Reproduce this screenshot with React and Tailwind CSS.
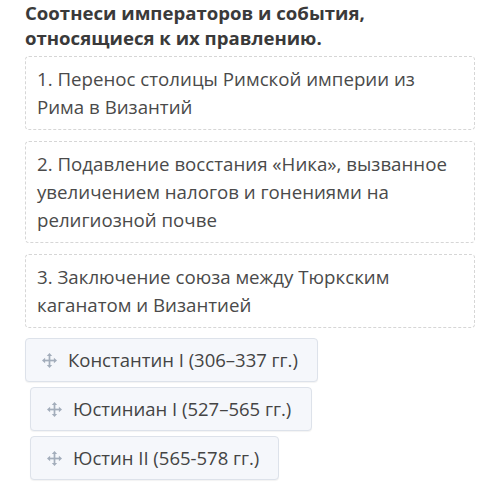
function MoveIcon() {
  return (
    <svg width="15" height="15" viewBox="0 0 14 14" className="shrink-0" fill="#a3adbb">
      <rect x="6.2" y="2" width="1.6" height="10" />
      <rect x="2" y="6.2" width="10" height="1.6" />
      <polygon points="7,0 4.5,2.9 9.5,2.9" />
      <polygon points="7,14 4.5,11.1 9.5,11.1" />
      <polygon points="0,7 2.9,4.5 2.9,9.5" />
      <polygon points="14,7 11.1,4.5 11.1,9.5" />
    </svg>
  );
}

export default function App() {
  const events = [
    '1. Перенос столицы Римской империи из Рима в Византий',
    '2. Подавление восстания «Ника», вызванное увеличением налогов и гонениями на религиозной почве',
    '3. Заключение союза между Тюркским каганатом и Византией',
  ];

  const rulers = [
    { name: 'Константин I (306–337 гг.)', cls: 'ml-0 w-[293px]' },
    { name: 'Юстиниан I (527–565 гг.)', cls: 'ml-[5px] w-[282px]' },
    { name: 'Юстин II (565-578 гг.)', cls: 'ml-[5px] w-[249px]' },
  ];

  return (
    <div className="w-[500px] h-[482px] bg-white overflow-hidden px-[25px] font-['Open_Sans',sans-serif]">
      <h1 className="text-[18.6px] leading-[25px] font-bold text-[#3a3a3a]">
        Соотнеси императоров и события,
        <br />
        относящиеся к их правлению.
      </h1>

      <div className="mt-[6px] flex flex-col gap-[11px] w-[450px]">
        {events.map((e) => (
          <div
            key={e}
            className="border border-dashed border-[#d6d6d6] rounded-[4px] pl-[11px] pr-[19px] py-[8px] text-[18.7px] leading-[28px] text-[#4a4a4a]"
          >
            {e}
          </div>
        ))}
      </div>

      <div className="mt-[10px] flex flex-col gap-[5px]">
        {rulers.map((r) => (
          <div
            key={r.name}
            className={`${r.cls} h-[44px] flex items-center gap-[11px] pl-[16px] bg-[#f5f7fb] border border-[#dde2ea] rounded-[4px] text-[18.5px] text-[#444] shadow-[0_1px_1px_rgba(0,0,0,0.05)]`}
          >
            <MoveIcon />
            <span>{r.name}</span>
          </div>
        ))}
      </div>
    </div>
  );
}
